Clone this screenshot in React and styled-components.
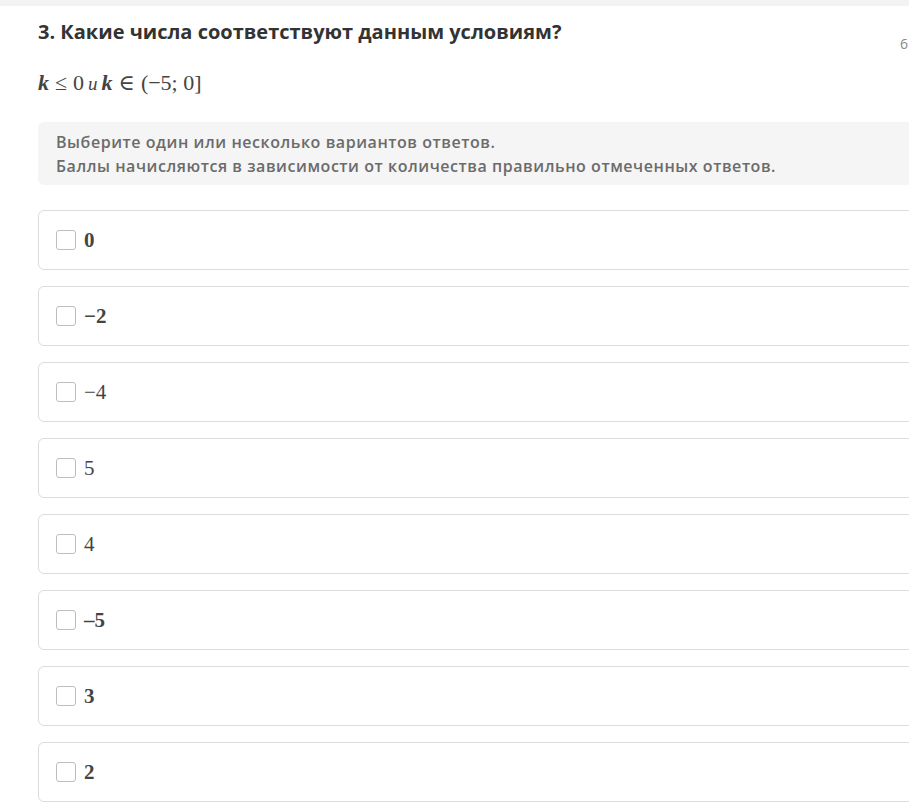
import styled, { createGlobalStyle } from 'styled-components';

const GlobalStyle = createGlobalStyle`
    body {
        margin: 0;
        background: #fff;
        overflow: hidden;
        font-family: "Open Sans", "Noto Sans", sans-serif;
    }
`;

const TopStrip = styled.div`
    height: 6px;
    background: #f3f3f3;
`;

const Content = styled.div`
    width: 960px;
    padding: 12px 0 0 38px;
`;

const Header = styled.div`
    display: grid;
    grid-template-columns: 862px auto;
    align-items: start;
`;

const Title = styled.h2`
    margin: 0;
    font-size: 20px;
    line-height: 28px;
    font-weight: 700;
    color: #333;
    white-space: nowrap;
`;

const Points = styled.span`
    font-size: 14px;
    line-height: 19px;
    color: #888;
    white-space: nowrap;
    padding-top: 16px;
    margin-bottom: -8px;
`;

const Formula = styled.div`
    margin-top: 22px;
    font-family: "Liberation Serif", "DejaVu Serif", serif;
    font-size: 22px;
    line-height: 30px;
    color: #444;

    i {
        font-style: italic;
        font-weight: 700;
    }
`;

const Op = styled.span`
    margin: 0 6px;
`;

const Conj = styled.span`
    font-family: "Liberation Serif", serif;
    font-style: italic;
    font-size: 19px;
    margin: 0 4px;
`;

const Hint = styled.div`
    margin-top: 23px;
    padding: 8px 18px 7px;
    background: #f5f5f5;
    border-radius: 6px;
    font-size: 16px;
    line-height: 24px;
    font-weight: 600;
    letter-spacing: 0.55px;
    color: #6b6b6b;
`;

const Options = styled.div`
    display: grid;
    gap: 16px;
    margin-top: 25px;
`;

const Option = styled.label`
    display: flex;
    align-items: center;
    gap: 8px;
    height: 60px;
    box-sizing: border-box;
    padding: 0 17px;
    border: 1px solid #dcdcdc;
    border-radius: 6px;
    cursor: pointer;
`;

const Box = styled.span`
    width: 20px;
    height: 20px;
    box-sizing: border-box;
    border: 1.5px solid #bdbdbd;
    border-radius: 3px;
    flex: none;
`;

const Value = styled.span`
    font-family: "Liberation Serif", "DejaVu Serif", serif;
    font-size: 21px;
    font-weight: ${p => (p.$bold ? 700 : 400)};
    color: #444;
`;

const answers = [
    { text: '0', bold: true },
    { text: '\u22122', bold: true },
    { text: '\u22124' },
    { text: '5' },
    { text: '4' },
    { text: '\u20135', bold: true },
    { text: '3', bold: true },
    { text: '2', bold: true },
];

export default function App() {
    return (
        <>
            <GlobalStyle />
            <TopStrip />
            <Content>
                <Header>
                    <Title>3. Какие числа соответствуют данным условиям?</Title>
                    <Points>6</Points>
                </Header>
                <Formula>
                    <i>k</i><Op>≤</Op>0<Conj>и</Conj><i>k</i><Op>∈</Op>(−5; 0]
                </Formula>
                <Hint>
                    Выберите один или несколько вариантов ответов.
                    <br />
                    Баллы начисляются в зависимости от количества правильно отмеченных ответов.
                </Hint>
                <Options>
                    {answers.map((a, i) => (
                        <Option key={i}>
                            <Box />
                            <Value $bold={a.bold}>{a.text}</Value>
                        </Option>
                    ))}
                </Options>
            </Content>
        </>
    );
}
